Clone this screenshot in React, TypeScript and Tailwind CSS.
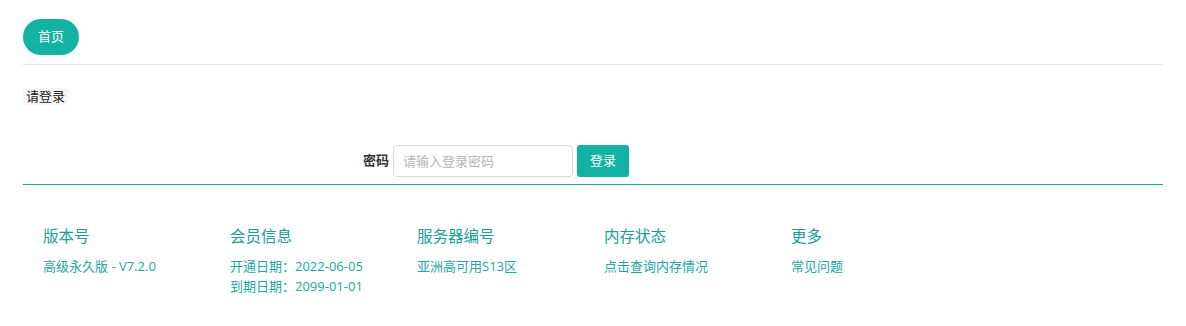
const font = { fontFamily: '"Segoe UI", "Open Sans", "Noto Sans CJK SC", sans-serif' };

const columns = [
  { title: "版本号", lines: ["高级永久版 - V7.2.0"] },
  { title: "会员信息", lines: ["开通日期：2022-06-05", "到期日期：2099-01-01"] },
  { title: "服务器编号", lines: ["亚洲高可用S13区"] },
  { title: "内存状态", lines: ["点击查询内存情况"] },
  { title: "更多", lines: ["常见问题"] },
];

export default function App() {
  return (
    <div className="min-h-[326px] bg-white px-[23px] pt-[19px]" style={font}>
      <div className="border-b border-[#e6e6e6] pb-[9px]">
        <button className="flex h-[36px] w-[56px] items-center justify-center rounded-full bg-[#13b3a4] text-[13px] text-white">
          首页
        </button>
      </div>

      <div className="mt-[23px] flex">
        <span className="rounded-[3px] bg-[#f4f5f6] px-[3px] text-[13px] leading-[17px] text-[#222]">
          请登录
        </span>
      </div>

      <div className="mt-[40px] flex items-center">
        <label className="w-[370px] pr-[4px] text-right text-[13px] font-bold text-[#333]">密码</label>
        <input
          placeholder="请输入登录密码"
          className="h-[32px] w-[180px] rounded-[4px] border border-[#d9d9d9] px-[9px] text-[13px] text-[#333] outline-none placeholder:text-[#b5b5b5]"
        />
        <button className="ml-[4px] h-[32px] w-[52px] rounded-[3px] bg-[#13b3a4] text-[13px] text-white">
          登录
        </button>
      </div>
      <div className="mt-[7px] h-px bg-[#16aaa0]" />

      <div className="flex pl-[20px] pt-[40px]">
        {columns.map((c) => (
          <div key={c.title} className="w-[187px]">
            <h3 className="text-[15.5px] leading-[22px] text-[#1a9e97]">{c.title}</h3>
            <div className="mt-[9px] flex flex-col">
              {c.lines.map((l) => (
                <a key={l} className="text-[13px] leading-[20px] text-[#21a79f]">
                  {l}
                </a>
              ))}
            </div>
          </div>
        ))}
      </div>
    </div>
  );
}
